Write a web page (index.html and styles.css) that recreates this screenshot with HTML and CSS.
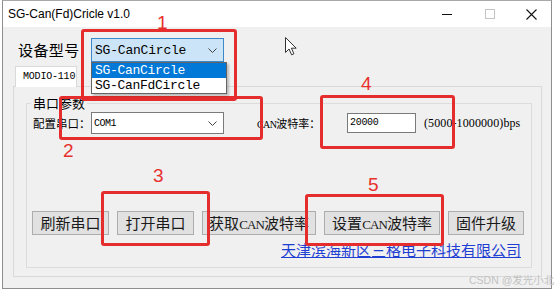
FILE: index.html
```html
<!DOCTYPE html>
<html lang="zh-CN">
<head>
    <meta charset="UTF-8">
    <meta name="viewport" content="width=device-width, initial-scale=1.0">
    <title>SG-Can(Fd)Cricle v1.0</title>
    <link rel="stylesheet" href="styles.css">
</head>
<body>
    <div class="screen">
        <div class="window">
            <!-- 标题栏 -->
            <div class="titlebar">
                <span class="title">SG-Can(Fd)Cricle v1.0</span>
                <div class="caption-buttons">
                    <span class="cap-btn cap-min">
                        <svg width="10" height="10" viewBox="0 0 10 10"><line x1="0" y1="5.5" x2="10" y2="5.5" stroke="#111" stroke-width="1"/></svg>
                    </span>
                    <span class="cap-btn cap-max">
                        <svg width="10" height="10" viewBox="0 0 10 10"><rect x="0.5" y="0.5" width="9" height="9" fill="none" stroke="#c4c4c4" stroke-width="1"/></svg>
                    </span>
                    <span class="cap-btn cap-close">
                        <svg width="11" height="11" viewBox="0 0 11 11"><path d="M0.5 0.5 L10.5 10.5 M10.5 0.5 L0.5 10.5" stroke="#111" stroke-width="1.1"/></svg>
                    </span>
                </div>
            </div>

            <div class="client">
                <!-- 设备型号 -->
                <div class="device-row">
                    <span class="device-label">设备型号</span>
                    <div class="combo combo-open">
                        <span class="combo-text">SG-CanCircle</span>
                        <svg class="chevron" width="9" height="5" viewBox="0 0 9 5"><polyline points="0.5,0.5 4.5,4.5 8.5,0.5" fill="none" stroke="#444" stroke-width="1"/></svg>
                        <ul class="dropdown">
                            <li class="selected">SG-CanCircle</li>
                            <li>SG-CanFdCircle</li>
                        </ul>
                    </div>
                </div>

                <!-- 选项卡 -->
                <div class="tabs">
                    <div class="tab-strip">
                        <div class="tab">MODIO-110</div>
                    </div>
                    <div class="tab-panel">
                        <fieldset class="group">
                            <legend>串口参数</legend>

                            <div class="field-row">
                                <span class="port-label">配置串口：</span>
                                <div class="combo port-combo">
                                    <span class="combo-text small">COM1</span>
                                    <svg class="chevron" width="9" height="5" viewBox="0 0 9 5"><polyline points="0.5,0.5 4.5,4.5 8.5,0.5" fill="none" stroke="#444" stroke-width="1"/></svg>
                                </div>
                                <span class="baud-label"><span class="latin">CAN</span>波特率：</span>
                                <div class="textbox">20000</div>
                                <span class="range">(5000-1000000)bps</span>
                            </div>

                            <div class="button-row">
                                <button class="btn btn-refresh">刷新串口</button>
                                <button class="btn btn-open">打开串口</button>
                                <button class="btn btn-get">获取<span class="latin">CAN</span>波特率</button>
                                <button class="btn btn-set">设置<span class="latin">CAN</span>波特率</button>
                                <button class="btn btn-fw">固件升级</button>
                            </div>

                            <div class="link-row">
                                <a href="#" class="company-link">天津滨海新区三格电子科技有限公司</a>
                            </div>
                        </fieldset>
                    </div>
                </div>
            </div>
        </div>

        <!-- 标注框 -->
        <div class="mark box-1"></div>
        <div class="mark box-2"></div>
        <div class="mark box-3"></div>
        <div class="mark box-4"></div>
        <div class="mark box-5"></div>
        <span class="mark-num num-1">1</span>
        <span class="mark-num num-2">2</span>
        <span class="mark-num num-3">3</span>
        <span class="mark-num num-4">4</span>
        <span class="mark-num num-5">5</span>

        <!-- 鼠标指针 -->
        <svg class="cursor" width="13" height="19" viewBox="0 0 13 19">
            <path d="M0.5 0.5 L0.5 15.5 L4 12 L6.6 17.8 L8.9 16.8 L6.4 11.2 L11.2 11.2 Z" fill="#fff" stroke="#333" stroke-width="1" stroke-linejoin="round"/>
        </svg>

        <span class="watermark">CSDN @发光小北</span>
    </div>
</body>
</html>
```

FILE: styles.css
```css
:root {
    --win-bg: #f0f0f0;
    --border-light: #d9d9d9;
    --btn-bg: #e1e1e1;
    --btn-border: #adadad;
    --select-blue: #0078d7;
    --mark-red: #e52d2d;
    --link-blue: #1f3fd2;
}

* {
    margin: 0;
    padding: 0;
    box-sizing: border-box;
}

body {
    background: #fff;
    font-family: "Noto Sans CJK SC", sans-serif;
    color: #000;
}

.screen {
    position: relative;
    width: 556px;
    height: 293px;
    overflow: hidden;
}

.window {
    margin-left: 2px;
    width: 550px;
    height: 289px;
    border: 1px solid #8e8e8e;
    border-top-color: #a8a8a8;
    background: var(--win-bg);
    display: flex;
    flex-direction: column;
}

/* 标题栏 */
.titlebar {
    height: 26px;
    background: #fff;
    display: flex;
    align-items: center;
    justify-content: space-between;
}

.title {
    padding-left: 5px;
    font-family: "Liberation Sans", sans-serif;
    font-size: 12px;
}

.caption-buttons {
    display: flex;
    height: 100%;
}

.cap-btn {
    display: flex;
    align-items: center;
    justify-content: center;
}

.cap-min { width: 43px; }
.cap-max { width: 44px; }
.cap-close { width: 39px; }

/* 客户区 */
.client {
    flex: 1;
    display: flex;
    flex-direction: column;
    padding-top: 11px;
}

.device-row {
    display: flex;
    align-items: center;
    height: 24px;
    padding-left: 15px;
}

.device-label {
    width: 73px;
    font-size: 15px;
    letter-spacing: 0.4px;
    line-height: 24px;
}

.combo {
    position: relative;
    display: flex;
    align-items: center;
    border: 1px solid #7a7a7a;
    background: #fff;
}

.combo-open {
    width: 133px;
    height: 24px;
    background: #cce4f7;
    border-color: #3d88c9;
}

.combo-text {
    padding-left: 3px;
    font-family: "Liberation Mono", monospace;
    font-size: 13px;
    letter-spacing: -0.2px;
    white-space: nowrap;
}

.combo-text.small {
    padding-left: 2px;
    font-size: 10px;
    letter-spacing: -0.5px;
}

.chevron {
    margin-left: auto;
    margin-right: 6px;
}

.dropdown {
    position: absolute;
    top: calc(100% + 1px);
    left: -1px;
    width: 136px;
    list-style: none;
    background: #fff;
    border: 1px solid #646464;
    box-shadow: 2px 2px 2px rgba(0, 0, 0, 0.22);
    z-index: 2;
}

.dropdown li {
    height: 15px;
    line-height: 15px;
    padding-left: 3px;
    font-family: "Liberation Mono", monospace;
    font-size: 13px;
    letter-spacing: -0.3px;
    white-space: nowrap;
}

.dropdown li.selected {
    background: var(--select-blue);
    color: #fff;
}

/* 选项卡 */
.tabs {
    flex: 1;
    display: flex;
    flex-direction: column;
    margin: 4px 9px 11px 10px;
}

.tab-strip {
    display: flex;
}

.tab {
    position: relative;
    z-index: 1;
    margin-left: 2px;
    margin-bottom: -1px;
    width: 62px;
    height: 21px;
    padding-left: 7px;
    background: #fff;
    border: 1px solid var(--border-light);
    border-bottom: none;
    font-family: "Liberation Mono", monospace;
    font-size: 10px;
    letter-spacing: -0.2px;
    line-height: 20px;
}

.tab-panel {
    flex: 1;
    display: flex;
    flex-direction: column;
    padding: 8px 9px 8px 12px;
    border: 1px solid var(--border-light);
    background: var(--win-bg);
}

.group {
    flex: 1;
    min-width: 0;
    border: 1px solid #dcdcdc;
}

.group legend {
    margin-left: 4px;
    padding: 0 2px;
    font-size: 13px;
    line-height: 16px;
}

.field-row {
    display: flex;
    align-items: center;
    height: 22px;
    margin-top: 1px;
    padding-left: 6px;
}

.port-label {
    width: 58px;
    font-size: 11.5px;
    white-space: nowrap;
}

.port-combo {
    width: 133px;
    height: 22px;
}

.baud-label {
    width: 90px;
    margin-left: 33px;
    font-size: 11px;
    white-space: nowrap;
}

.baud-label .latin {
    font-family: "Liberation Serif", serif;
    font-size: 10px;
    letter-spacing: -0.6px;
}

.textbox {
    width: 69px;
    height: 20px;
    padding-left: 2px;
    border: 1px solid #7a7a7a;
    background: #fff;
    font-family: "Liberation Mono", monospace;
    font-size: 10px;
    letter-spacing: -0.3px;
    line-height: 18px;
}

.range {
    margin-left: 8px;
    font-family: "Liberation Serif", serif;
    font-size: 12px;
    letter-spacing: 0.1px;
    white-space: nowrap;
}

.button-row {
    display: flex;
    gap: 8px;
    margin-top: 77px;
    padding-left: 5px;
}

.btn {
    height: 24px;
    border: 1px solid var(--btn-border);
    background: var(--btn-bg);
    color: #1a1a1a;
    font-family: "Noto Sans CJK SC", sans-serif;
    font-size: 15px;
    line-height: 22px;
    white-space: nowrap;
}

.btn .latin {
    font-family: "Liberation Serif", serif;
    font-size: 13px;
    letter-spacing: -0.9px;
}

.btn-refresh { width: 77px; }
.btn-open { width: 77px; }
.btn-get { width: 114px; }
.btn-set { width: 116px; }
.btn-fw { width: 76px; }

.link-row {
    display: flex;
    justify-content: flex-end;
    margin-top: 6px;
    padding-right: 10px;
}

.company-link {
    color: var(--link-blue);
    font-size: 15px;
    line-height: 18px;
    text-decoration: underline;
}

/* 红色标注 */
.mark {
    position: absolute;
    border: 3px solid var(--mark-red);
    border-radius: 3px;
}

.box-1 { left: 81px; top: 29px; width: 156px; height: 72px; }
.box-2 { left: 59px; top: 96px; width: 204px; height: 44px; }
.box-3 { left: 101px; top: 191px; width: 109px; height: 55px; }
.box-4 { left: 320px; top: 95px; width: 135px; height: 54px; }
.box-5 { left: 305px; top: 194px; width: 139px; height: 52px; }

.mark-num {
    position: absolute;
    color: #e8302c;
    font-family: "Liberation Sans", sans-serif;
    font-size: 19px;
    line-height: 1;
}

.num-1 { left: 157px; top: 13px; }
.num-2 { left: 63px; top: 141px; }
.num-3 { left: 153px; top: 166px; }
.num-4 { left: 361px; top: 74px; }
.num-5 { left: 368px; top: 175px; }

.cursor {
    position: absolute;
    left: 285px;
    top: 37px;
}

.watermark {
    position: absolute;
    left: 469px;
    top: 272px;
    color: #c2c2c2;
    font-family: "Liberation Sans", "Noto Sans CJK SC", sans-serif;
    font-size: 10.5px;
}
```
